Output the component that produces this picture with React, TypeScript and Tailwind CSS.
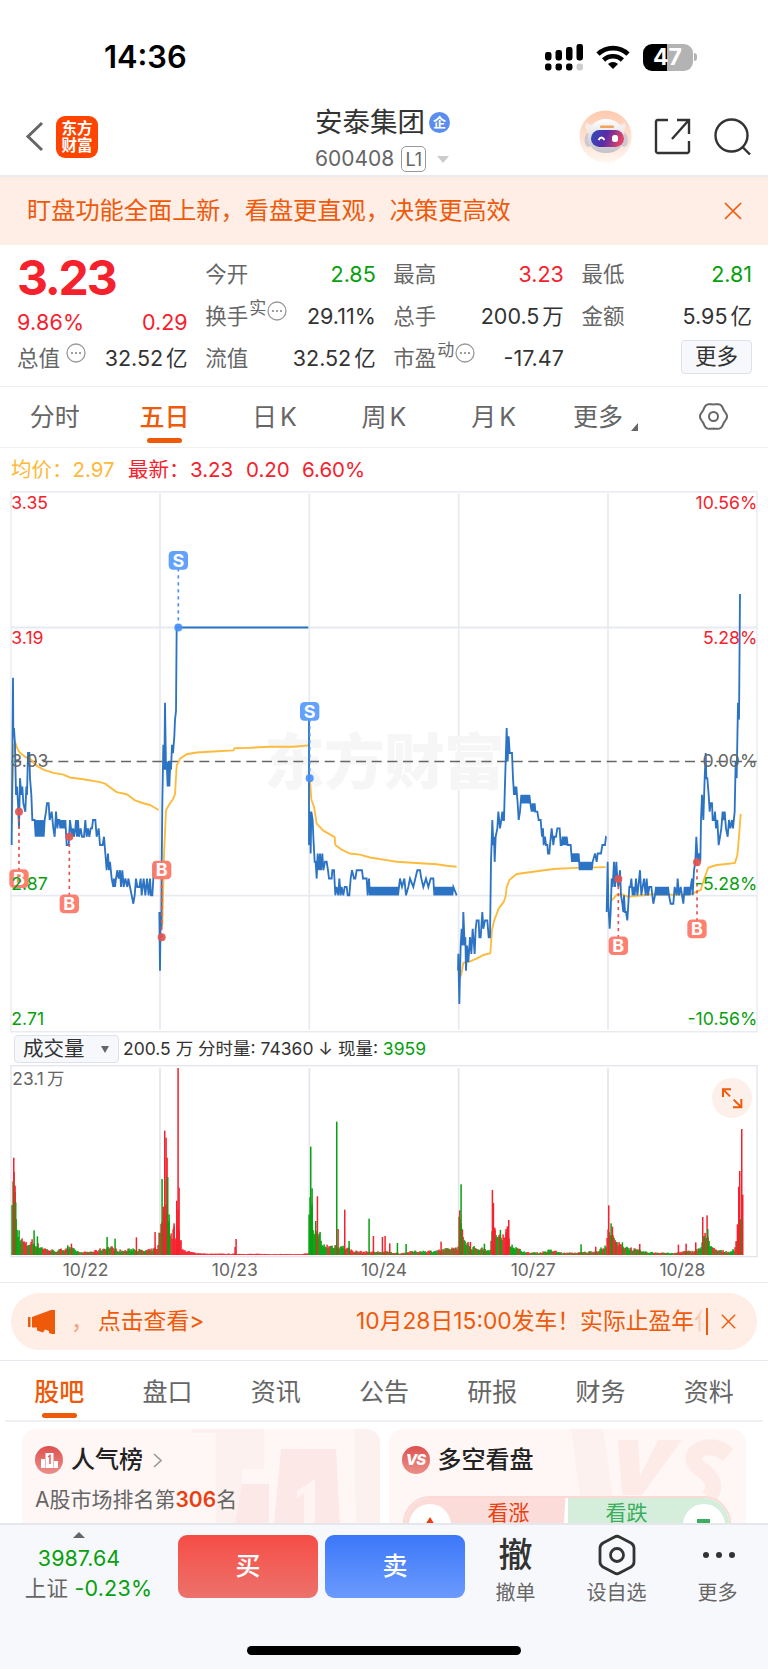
import React from 'react';

type Point = [number, number];

const RED = '#f5222d';
const GREEN = '#07a00e';
const font = "font-[Inter,'Noto_Sans_CJK_SC',sans-serif]";

// back and forth between two price levels
const zig = (from: number, to: number, lo: number, hi: number): Point[] => {
  const out: Point[] = [];
  for (let x = from, i = 0; x <= to; x += 3, i++) {
    out.push([x, i % 2 ? hi : lo]);
  }
  return out;
};

// x in chart units, price in cents
const prices: Point[][] = [
  [
    [35, 293], [39, 313], [40, 306], [42, 307], [45, 305], [48, 299], [51, 300], [54, 298], [57, 295], [60, 301], [64, 299],
    [67, 300], [70, 298], [76, 297], [79, 300], [81, 299], [84, 304], [88, 304], [90, 301], [94, 299], [97, 296], [104, 296],
    ...zig(107, 135, 294, 296), [138, 297], [141, 298], [146, 298], [149, 296], [155, 297], [160, 295], [164, 294],
    [168, 297], [172, 295], [175, 296], ...zig(178, 196, 296, 295), [200, 293], [206, 293], [210, 296], ...zig(213, 224, 295, 294), [226, 295],
    [228, 296], [231, 294], [234, 296], [237, 294], [242, 295], [246, 294], [252, 294], [256, 296], [260, 294], [264, 295], [268, 294], [272, 295], [276, 295],
    [279, 296], [286, 296], [290, 294], [296, 295], [300, 293], [308, 293], [312, 294],
    [316, 292], [320, 290], [324, 292], [327, 290], [330, 291], [335, 289], [340, 288], ...zig(342, 350, 289, 288), [352, 290],
    [356, 289], [360, 290], [363, 288], [367, 290], [371, 288], [376, 289], [382, 288], [385, 289], [390, 288], [395, 287],
    [400, 286], [404, 287], [408, 289], [412, 288], [418, 288], [422, 289], [425, 287], [431, 289], [436, 287], [441, 289], [446, 287],
    [450, 289], [453, 287], [457, 287], [460, 289], [463, 291], [468, 290], [474, 290],
  ],
  [
    [478, 285], [480, 278], [482, 285], [484, 283], [485, 290], [487, 298], [490, 305], [493, 302], [495, 310], [498, 302],
    [500, 303], [503, 300], [506, 303], [508, 300], [511, 303], [513, 302], [516, 305], [519, 304], [523, 306], [525, 308],
    [528, 309], [530, 319], [925, 319],
  ],
  [
    [927, 309], [927, 293], [930, 297], [932, 292], [934, 297], [938, 296], [940, 294], [944, 291], [947, 291], [950, 289],
    [953, 292], [957, 290], [960, 292], [963, 290], [967, 292], [970, 290], [975, 291], [980, 291], [984, 290], [987, 289],
    [995, 289], [997, 290], [1002, 290], [1006, 287], [1010, 288], [1015, 287], [1018, 289], [1022, 287], [1025, 288], [1030, 287],
    [1034, 288], [1040, 288], [1043, 287], [1048, 287], [1052, 289], [1056, 290], [1062, 289], [1066, 289], [1070, 290], [1086, 290],
    [1089, 289], [1100, 289], [1103, 287], [1107, 289], ...zig(1110, 1195, 287, 288), [1200, 289], [1206, 288], [1213, 289],
    [1218, 287], [1225, 288], [1230, 289], [1240, 288], [1246, 289], [1252, 290], [1260, 290], [1264, 289], [1270, 288],
    [1278, 289], [1285, 288], [1292, 289], [1300, 289], ...zig(1303, 1360, 287, 288), [1370, 287],
  ],
  [
    [1374, 278], [1375, 280], [1378, 274], [1382, 281], [1385, 283], [1388, 281], [1390, 285], [1394, 281], [1396, 282], [1398, 278],
    [1401, 281], [1405, 279], [1410, 282], [1414, 280], [1418, 283], [1424, 280], [1427, 283], [1430, 284], [1436, 284],
    [1438, 282], [1442, 282], [1447, 285], [1450, 283], [1455, 284], [1462, 284], [1466, 282], [1470, 282], [1473, 291],
    [1477, 296], [1480, 293], [1482, 294], [1484, 291], [1487, 294], [1492, 295], [1495, 297], [1500, 295], [1504, 296], [1507, 297],
    [1510, 296], [1512, 296], [1514, 299], [1517, 303], [1520, 307], [1523, 303], [1526, 306], [1529, 304], [1536, 304], [1539, 301],
    [1542, 299], [1545, 300], [1547, 299], [1549, 300], [1553, 298], [1556, 296], [1560, 297], [1564, 299], ...zig(1567, 1592, 298, 299), [1595, 297],
    [1598, 298], [1601, 297], [1604, 298], [1606, 297], [1612, 297], [1616, 296], [1622, 296], [1626, 294], [1629, 295], [1631, 293], [1635, 294],
    [1638, 293], [1642, 293], [1644, 292], [1648, 292], [1650, 293], [1655, 295], [1660, 293], [1663, 294], [1668, 294], [1672, 295], [1679, 295], [1682, 293],
    ...zig(1685, 1703, 293, 294), [1707, 293], [1712, 293], [1716, 291], ...zig(1718, 1737, 292, 291), ...zig(1739, 1780, 290, 291),
    [1785, 292], [1790, 291], [1793, 292], [1803, 292], [1807, 293], [1815, 293], [1818, 294], [1819, 294],
  ],
  [
    [1820, 285], [1823, 291], [1825, 286], [1829, 283], [1832, 285], [1835, 289], [1838, 288], [1842, 291], [1845, 288], [1849, 291], [1852, 289],
    [1855, 288], [1860, 290], [1863, 287], [1867, 286], [1870, 285], [1872, 287], [1875, 285], [1878, 285], [1882, 284],
    [1885, 286], [1888, 288], [1891, 288], [1894, 289], [1898, 287], [1901, 288], [1904, 287], [1908, 289], [1912, 287], [1915, 288], [1920, 290], [1924, 287],
    [1928, 288], [1932, 289], [1937, 287], [1940, 289], [1944, 287], [1948, 288], [1954, 288], [1960, 286], [1965, 287], ...zig(1968, 2008, 288, 287),
    [2012, 286], [2020, 286], [2024, 288], [2030, 287], [2033, 289], [2037, 287], [2042, 288], [2050, 286], [2054, 288],
    ...zig(2057, 2072, 287, 288), [2076, 289], [2078, 287], [2082, 290], [2086, 291], [2089, 294], [2093, 291], [2097, 292],
    [2101, 291], [2103, 296], [2106, 299], [2110, 296], [2114, 301], [2117, 304], [2119, 301], [2122, 301], [2126, 299], [2129, 297],
    [2132, 298], [2136, 298], [2138, 296], [2142, 296], [2145, 297], [2148, 295], [2152, 296], [2156, 293], [2160, 294], [2164, 295], [2168, 297], [2171, 296], [2174, 297],
    [2178, 295], [2183, 294], [2187, 296], [2191, 295], [2196, 296], [2199, 295], [2204, 297], [2207, 303], [2210, 301], [2214, 310], [2217, 308],
    [2220, 323],
  ],
];

const averages = [
  '36,960 38,850 42,740 46,735 52,752 58,762 75,775 90,780 110,800 130,811 160,820 190,825 210,833 250,838 300,846 315,850 350,874 380,880 405,897 430,905 450,910 476,924',
  '487,1250 492,1050 498,925 508,908 518,895 525,880 530,800 540,780 560,768 590,763 640,760 700,757 704,751 745,750 810,747 880,747 925,743',
  '930,840 934,895 942,915 950,962 970,982 995,995 1004,1000 1006,1022 1025,1035 1050,1046 1080,1049 1110,1057 1150,1063 1190,1069 1260,1073 1310,1076 1340,1080 1370,1083',
  '1383,1390 1390,1352 1410,1348 1430,1340 1450,1330 1471,1325 1476,1260 1482,1235 1496,1200 1512,1180 1517,1165 1520,1140 1528,1120 1550,1103 1600,1097 1660,1089 1730,1086 1817,1084',
  '1832,1180 1840,1172 1850,1162 1865,1160 1885,1167 1905,1165 1960,1160 2020,1161 2070,1160 2085,1155 2102,1148 2115,1110 2125,1085 2150,1078 2180,1075 2205,1072 2212,1050 2217,1000 2222,935',
];

// y values in the data are in 1/2.8 px, the chart draws in 1/3 px
const Y = 3 / 2.8;
const priceY = (cents: number) => 788 - (cents - 303) * 23.43;

const marks = [
  { t: 'B', x: 57, dot: 929, box: 1116 },
  { t: 'B', x: 208, dot: 999, box: 1187 },
  { t: 'B', x: 485, dot: 1280, box: 1092 },
  { t: 'S', x: 535, dot: 413, box: 225 },
  { t: 'S', x: 929, dot: 835, box: 648 },
  { t: 'B', x: 1855, dot: 1117, box: 1304 },
  { t: 'B', x: 2091, dot: 1070, box: 1257 },
];

const axis = [
  { y: 82, l: '3.35', r: '10.56%', c: RED },
  { y: 458, l: '3.19', r: '5.28%', c: RED },
  { y: 804, l: '3.03', r: '0.00%', c: '#666' },
  { y: 1149, l: '2.87', r: '-5.28%', c: GREEN },
  { y: 1526, l: '2.71', r: '-10.56%', c: GREEN },
];

const dayLines = [480, 928, 1376, 1824];

function PriceChart() {
  return (
    <svg className="block h-[543px] w-full" viewBox="0 30 2304 1629">
      <g transform={`scale(1 ${Y})`} stroke="#e8eaf0" fill="none">
        <rect x="33" y="33" width="2238" height="1512" strokeWidth="4" />
        {dayLines.map(x => (
          <line key={x} x1={x} x2={x} y1="38" y2="1539" strokeWidth="5" />
        ))}
        <line x1="33" x2="2270" y1="413" y2="413" strokeWidth="5" />
        <line x1="33" x2="2270" y1="1164" y2="1164" strokeWidth="5" />
      </g>
      <text x="792" y="912" fontSize="182" fontWeight="900" fill="#f6f6f6" textLength="722">东方财富</text>
      <g transform={`scale(1 ${Y})`} fill="none">
        <line x1="33" x2="2270" y1="788" y2="788" stroke="#666" strokeWidth="4" strokeDasharray="30 17" strokeDashoffset="-1" />
        {averages.map((points, i) => (
          <polyline key={i} points={points} stroke="#fdbb3d" strokeWidth="5.500" />
        ))}
        {prices.map((day, i) => (
          <polyline key={i} points={day.map(([x, c]) => `${x},${priceY(c)}`).join(' ')} stroke="#2c73c4" strokeWidth="5.500" />
        ))}
      </g>
      {marks.map(m => {
        const color = m.t === 'B' ? '#fd7969' : '#5a9dfd';
        const dot = m.t === 'B' ? '#e25550' : '#4a90f5';
        return (
          <g key={m.x}>
            <line x1={m.x} x2={m.x} y1={m.dot * Y} y2={m.box * Y} stroke={dot} strokeWidth="5" strokeDasharray="10 11" />
            <circle cx={m.x} cy={m.dot * Y} r="12" fill={dot} fillOpacity="0.92" />
            <rect x={m.x - 29} y={m.box * Y - 28} width="58" height="56" rx="13" fill={color} fillOpacity="0.95" />
            <text x={m.x} y={m.box * Y + 19} fontSize="54" fontWeight="700" fill="#fff" textAnchor="middle">{m.t}</text>
          </g>
        );
      })}
      {axis.map(a => (
        <g key={a.l} fill={a.c} fontSize="53">
          <text x="34" y={a.y * Y}>{a.l}</text>
          <text x="2272" y={a.y * Y} textAnchor="end">{a.r}</text>
        </g>
      ))}
    </svg>
  );
}

// envelope of the small bars: x, height
const volume: Point[] = [
  [35, 85], [38, 290], [43, 290], [46, 160], [50, 90], [56, 60], [64, 38], [80, 26], [95, 34], [110, 26], [140, 14], [170, 10],
  [200, 18], [215, 16], [240, 6], [280, 9], [310, 16], [330, 20], [350, 13], [370, 10], [400, 16], [430, 10], [460, 14],
  [474, 22], [482, 100], [488, 140], [496, 170], [504, 130], [512, 60], [524, 60], [530, 70], [534, 150], [540, 50], [548, 12],
  [580, 6], [620, 3], [700, 3], [900, 2], [924, 4], [928, 170], [936, 190], [940, 70], [955, 80], [964, 25], [990, 22], [1010, 24], [1040, 18], [1060, 10], [1090, 8],
  [1160, 8], [1200, 4], [1240, 9], [1300, 10], [1340, 14], [1374, 20], [1377, 120], [1384, 100], [1392, 45], [1410, 20], [1440, 16],
  [1470, 14], [1476, 80], [1484, 60], [1500, 45], [1515, 40], [1524, 90], [1530, 32], [1550, 16], [1580, 6], [1620, 6], [1650, 12], [1690, 5], [1740, 6],
  [1790, 10], [1818, 22], [1824, 60], [1832, 90], [1842, 35], [1860, 25], [1880, 20], [1910, 12], [1940, 7], [1990, 6], [2020, 4],
  [2050, 9], [2080, 9], [2104, 20], [2112, 50], [2122, 60], [2130, 20], [2150, 12], [2190, 8], [2206, 18], [2212, 50], [2222, 110], [2228, 110],
];

const spikes: [number, number, string][] = [
  [41, 292, RED], [45, 208, RED], [47, 158, GREEN], [102, 74, GREEN], [112, 56, GREEN], [203, 29, GREEN], [214, 34, RED],
  [321, 54, GREEN], [345, 49, GREEN], [409, 53, RED], [465, 69, RED], [486, 228, GREEN], [490, 145, RED], [494, 373, RED], [498, 352, RED],
  [501, 292, RED], [503, 234, GREEN], [507, 122, GREEN], [522, 95, RED], [530, 163, RED], [534, 561, RED], [537, 202, RED], [705, 24, RED], [708, 48, RED],
  [932, 325, GREEN], [936, 200, GREEN], [947, 102, GREEN], [952, 176, RED], [1010, 400, GREEN], [1014, 78, RED], [1034, 136, RED],
  [1047, 42, GREEN], [1107, 109, GREEN], [1120, 57, RED], [1147, 54, RED], [1155, 57, RED], [1169, 35, RED], [1192, 36, GREEN], [1218, 33, GREEN],
  [1323, 40, RED], [1379, 134, RED], [1383, 212, GREEN], [1387, 75, RED], [1411, 39, RED], [1453, 34, GREEN], [1477, 195, RED], [1480, 156, RED], [1484, 82, RED],
  [1501, 75, GREEN], [1518, 70, RED], [1522, 86, RED], [1526, 105, RED], [1743, 32, GREEN], [1787, 25, RED], [1826, 149, RED], [1833, 95, GREEN], [1837, 85, RED],
  [1847, 40, RED], [1867, 38, GREEN], [1919, 33, RED], [2035, 31, RED], [2058, 34, RED], [2087, 38, RED], [2108, 114, RED],
  [2113, 55, GREEN], [2121, 119, RED], [2123, 78, GREEN], [2212, 92, RED], [2216, 205, RED], [2219, 252, RED], [2222, 108, GREEN], [2225, 378, RED], [2228, 181, RED],
];

const bars: [number, number, string][] = [];
let seed = 7;
const rand = () => {
  seed = (seed * 16807) % 2147483647;
  return seed / 2147483647;
};
for (let x = 36, k = 0; x < 2229; x += 3) {
  while (volume[k + 1] && volume[k + 1][0] < x) k++;
  const [x0, h0] = volume[k];
  const [x1, h1] = volume[k + 1] || volume[k];
  const h = h0 + ((h1 - h0) * (x - x0)) / (x1 - x0 || 1);
  const onlyRed = (x > 512 && x < 926) || (x > 1506 && x < 1530);
  const open = (x > 926 && x < 964) || (x > 44 && x < 64) || (x > 1376 && x < 1386);
  const color = onlyRed ? RED : rand() < (open ? 0.9 : 0.58) ? GREEN : RED;
  bars.push([x, h * (h > 60 ? 0.7 + rand() * 0.3 : 0.8 + rand() * 0.7), color]);
}

function VolumeChart() {
  return (
    <svg className="block h-[195px] w-full" viewBox="0 99 2304 585">
      <g stroke="#e3e5ee" fill="none">
        <rect x="33" y="107" width="2238" height="573" strokeWidth="4" />
        {dayLines.map(x => (
          <line key={x} x1={x} x2={x} y1="114" y2="676" strokeWidth="5" />
        ))}
      </g>
      {[...bars, ...spikes].map(([x, h, c], i) => (
        <rect key={i} x={x - 2} y={675 - h} width="4.500" height={h} fill={c} />
      ))}
      <text x="37" y="164" fontSize="52" fill="#666">23.1<tspan dx="10">万</tspan></text>
      <circle cx="2196" cy="204" r="60" fill="#fdf0ea" />
      <g stroke="#ee5a0a" strokeWidth="6" fill="none">
        <path d="M2169 201V178h24M2170 179l20 20" />
        <path d="M2224 207v25h-25M2223 231l-22-22" />
      </g>
    </svg>
  );
}

const Dots = () => (
  <svg className="h-5 w-5 shrink-0" viewBox="0 0 20 20">
    <circle cx="10" cy="10" r="9" fill="none" stroke="#999" strokeWidth="1.3" />
    <circle cx="6" cy="10" r="1.1" fill="#888" />
    <circle cx="10" cy="10" r="1.1" fill="#888" />
    <circle cx="14" cy="10" r="1.1" fill="#888" />
  </svg>
);

const Cross = ({ className }: { className: string }) => (
  <svg className={className} viewBox="0 0 18 18" stroke="#ee5a0a" strokeWidth="1.7">
    <path d="M1 1l16 16M17 1L1 17" />
  </svg>
);

interface StatProps {
  label: string;
  value: string;
  unit?: string;
  tone?: string;
  sup?: string;
  dots?: boolean;
}

function Stat({ label, value, unit, tone = 'text-[#333]', sup, dots }: StatProps) {
  return (
    <div className="flex h-[42px] items-center whitespace-nowrap">
      <span className="text-[21.5px] text-[#666]">{label}</span>
      {sup && <span className="-mt-3.5 ml-px text-[17px] text-[#666]">{sup}</span>}
      {dots && <span className={sup ? '-mt-2.5 ml-px' : '-mt-2.5 ml-1.5'}><Dots /></span>}
      <span className={`ml-auto text-[21.5px] ${tone}`}>
        {value}
        {unit && <span className="ml-[3px]">{unit}</span>}
      </span>
    </div>
  );
}

function StatusBar() {
  return (
    <div className="flex h-[94px] items-center justify-between pt-[20px] pr-[71px] pl-[104px]">
      <span className="text-[30.8px] font-semibold">14:36</span>
      <div className="flex items-center">
        <svg className="h-[27px] w-[38px]" viewBox="0 0 38 27">
          <rect x="0" y="8" width="6.500" height="8.500" rx="2.400" />
          <rect x="10.500" y="6" width="6.500" height="10.500" rx="2.400" />
          <rect x="21" y="3" width="6.500" height="13.500" rx="2.400" />
          <rect x="31.500" y="0" width="6.500" height="16.500" rx="2.400" />
          <rect x="0" y="19.500" width="6.500" height="7" rx="2.400" />
          <rect x="10.500" y="19.500" width="6.500" height="7" rx="2.400" />
          <rect x="21" y="19.500" width="6.500" height="7" rx="2.400" />
          <rect x="31.500" y="19.500" width="6.500" height="7" rx="2.400" fill="#ccc" />
        </svg>
        <svg className="ml-[13px] h-6 w-[34px]" viewBox="0 0 34 24" fill="none" stroke="#000" strokeWidth="4.6">
          <path d="M2 9.2a21.5 21.5 0 0 1 30 0" />
          <path d="M7.6 15a13.5 13.5 0 0 1 18.8 0" />
          <path d="M17 24l-5-5a7.2 7.2 0 0 1 10 0z" fill="#000" stroke="none" />
        </svg>
        <div className="ml-[13px] flex h-[27px] w-[50px] items-center justify-center rounded-[9px] bg-linear-to-r from-black from-47% to-[#b3b3b3] to-47% text-[23px] font-bold text-white">47</div>
        <div className="ml-[1.5px] h-2 w-[3px] rounded-r-full bg-[#b3b3b3]" />
      </div>
    </div>
  );
}

function Robot() {
  return (
    <svg className="h-[53px] w-[53px]" viewBox="0 0 53 53">
      <defs>
        <linearGradient id="halo" x1="0" y1="0" x2="0" y2="1">
          <stop offset="0" stopColor="#fdc9ae" />
          <stop offset="1" stopColor="#fff6f1" />
        </linearGradient>
        <linearGradient id="visor" x1="0" y1="0" x2="1" y2="0.2">
          <stop offset="0" stopColor="#2c50b8" />
          <stop offset="0.5" stopColor="#5a2aa8" />
          <stop offset="1" stopColor="#dc4468" />
        </linearGradient>
        <linearGradient id="shell" x1="0" y1="0" x2="0" y2="1">
          <stop offset="0" stopColor="#fff" />
          <stop offset="1" stopColor="#c4c1c8" />
        </linearGradient>
      </defs>
      <circle cx="26.500" cy="26.500" r="26" fill="url(#halo)" />
      <path d="M7 12q-2 7 3 11l6-9q-6 2-9-2zM46 12q2 7-3 11l-6-9q6 2 9-2z" fill="#f3ecec" />
      <ellipse cx="9.500" cy="30" rx="4" ry="7" fill="#cfcad2" />
      <ellipse cx="45" cy="30" rx="4" ry="7" fill="#cfcad2" />
      <path d="M27 9c11 0 18 8 18 18 0 10-7 16-18 16S9 37 9 27c0-10 7-18 18-18z" fill="url(#shell)" />
      <rect x="12" y="20" width="33" height="17" rx="8.500" fill="url(#visor)" />
      <path d="M19.500 30q3-5 6 0" fill="none" stroke="#fff" strokeWidth="2" />
      <rect x="33" y="25" width="6" height="7" rx="2.500" fill="#fff" />
      <rect x="21" y="15.500" width="14" height="2.500" rx="1" fill="#f0a35e" />
    </svg>
  );
}

function Header() {
  return (
    <header className="flex h-[83px] items-center border-b-2 border-[#ececf0] pt-[4px] pr-[17px] pl-[25px]">
      <div className="flex w-[290px] items-center">
        <svg className="h-[31px] w-[19px]" viewBox="0 0 19 31" fill="none" stroke="#666" strokeWidth="3">
          <path d="M17 2L3 15.500l14 13.500" />
        </svg>
        <div className="ml-3 flex h-[42px] w-[42px] flex-col items-center justify-center rounded-[9px] bg-[#ff4400] text-[15.5px] leading-[17px] font-bold text-white">
          <span>东方</span>
          <span>财富</span>
        </div>
      </div>
      <div className="flex w-[264px] flex-col pt-[8px]">
        <div className="flex h-[37px] items-center">
          <span className="text-[27.5px] text-[#333]">安泰集团</span>
          <span className="ml-[4px] flex h-[21px] w-[21px] items-center justify-center rounded-full bg-[#5b8def] text-[13px] font-bold text-white">企</span>
        </div>
        <div className="flex h-[36px] items-center text-[#666]">
          <span className="text-[21px]">600408</span>
          <span className="ml-[7px] flex h-[26px] w-[25px] items-center justify-center rounded-[5px] border-[1.5px] border-[#999] text-[18px]">L1</span>
          <span className="ml-[11px] border-x-[6px] border-t-[7px] border-x-transparent border-t-[#ccc]" />
        </div>
      </div>
      <Robot />
      <svg className="ml-[22px] h-[37px] w-[37px]" viewBox="0 0 37 37" fill="none" stroke="#333" strokeWidth="2.4">
        <path d="M14 2H3.500A2 2 0 0 0 2 3.500v30A2 2 0 0 0 3.500 35h30a2 2 0 0 0 1.500-1.500V23" />
        <path d="M23 2h12v14M34 3L18 21" />
      </svg>
      <svg className="ml-auto h-[37px] w-[37px]" viewBox="0 0 37 37" fill="none" stroke="#333" strokeWidth="2.4">
        <circle cx="17.500" cy="17.500" r="16" />
        <path d="M28.500 29l7.500 7.500" />
      </svg>
    </header>
  );
}

function Quote() {
  return (
    <section className="flex h-[142px] gap-[17.5px] border-b border-[#eeeff2] pt-2 pr-4 pl-[17px]">
      <div className="flex-1">
        <div className="flex h-[54px] items-center pb-1 text-[48px] font-bold tracking-[-2.2px] text-[#f5222d]">3.23</div>
        <div className="flex h-[30px] items-center justify-between text-[21.5px] text-[#f5222d]">
          <span className="tracking-[0.2px]">9.86%</span>
          <span>0.29</span>
        </div>
        <Stat label="总值" value="32.52" unit="亿" dots />
      </div>
      <div className="flex-1">
        <Stat label="今开" value="2.85" tone="text-[#07a00e]" />
        <Stat label="换手" value="29.11%" sup="实" dots />
        <Stat label="流值" value="32.52" unit="亿" />
      </div>
      <div className="flex-1">
        <Stat label="最高" value="3.23" tone="text-[#f5222d]" />
        <Stat label="总手" value="200.5" unit="万" />
        <Stat label="市盈" value="-17.47" sup="动" dots />
      </div>
      <div className="flex-1">
        <Stat label="最低" value="2.81" tone="text-[#07a00e]" />
        <Stat label="金额" value="5.95" unit="亿" />
        <div className="flex h-[39px] items-center justify-end">
          <button className="h-[34px] w-[71px] rounded-[4px] border border-[#dfe1ea] bg-[#f7f8fc] text-[21.5px] leading-none text-[#333]">更多</button>
        </div>
      </div>
    </section>
  );
}

const periods = ['分时', '五日', '日K', '周K', '月K'];

// six rounded lobes around the centre
const gear = Array.from({ length: 72 }, (_, i) => {
  const a = (i * Math.PI) / 36;
  const r = 12.8 + 0.7 * Math.cos(6 * a);
  return `${(14.5 + r * Math.cos(a)).toFixed(2)},${(14.5 + r * Math.sin(a)).toFixed(2)}`;
}).join(' ');

function PeriodTabs() {
  return (
    <nav className="grid h-[61px] grid-cols-7 border-b border-[#eeeff2] text-[25px] text-[#666]">
      {periods.map(p => (
        <div key={p} className={`flex flex-col items-center pt-[12px] ${p === '五日' ? 'font-medium text-[#ee5a0a]' : ''}`}>
          <span className="h-[36px] leading-[36px]">
            {p.charAt(0)}
            <span className={p.endsWith('K') ? 'ml-[3px]' : ''}>{p.charAt(1)}</span>
          </span>
          {p === '五日' && <span className="mt-[3px] h-[5px] w-[35px] rounded-full bg-[#ee5a0a]" />}
        </div>
      ))}
      <div className="flex justify-center pt-[12px] pl-[4px]">
        <span className="leading-[36px]">更多</span>
        <svg className="mt-[24px] ml-[8px] h-2 w-[7px]" viewBox="0 0 7 8"><path d="M7 0v8H0z" fill="#666" /></svg>
      </div>
      <div className="flex justify-center pt-[15px]">
        <svg className="h-[29px] w-[29px]" viewBox="0 0 29 29" fill="none" stroke="#666" strokeWidth="2">
          <polygon points={gear} />
          <circle cx="14.500" cy="14.500" r="4.500" />
        </svg>
      </div>
    </nav>
  );
}

const sections = ['股吧', '盘口', '资讯', '公告', '研报', '财务', '资料'];

function Cards() {
  return (
    <div className="flex h-[101px] gap-[9px] overflow-hidden px-[22px] pt-[7px]">
      <div className="relative h-[120px] flex-1 overflow-hidden rounded-t-[14px] bg-[#fff7f5]">
        <svg className="absolute top-0 right-0 h-[95px] w-[190px]" viewBox="0 0 190 95">
          <path d="M2 0h72v40H52v55H26V4H2z" fill="#fdf1ef" />
          <path d="M52 55h27v40H45zM91 20h55l4 75H84z" fill="#fce8e6" />
          <path d="M165 0h25v74h-25zM166 74h24v21h-24z" fill="#fdf1ef" />
          <path d="M107 62l18-12v45h-11V64l-7 5z" fill="#fff4f2" />
        </svg>
        <div className="relative flex h-[62px] items-center pl-[13px]">
          <svg className="h-7 w-7" viewBox="0 0 28 28">
            <defs>
              <linearGradient id="rank" x1="0" y1="0" x2="0" y2="1">
                <stop offset="0" stopColor="#dd504e" />
                <stop offset="1" stopColor="#eb8f8a" />
              </linearGradient>
            </defs>
            <circle cx="14" cy="14" r="14" fill="url(#rank)" />
            <path d="M6 13h4v9H6zM10.500 7h8v15h-8zM19 15h4v7h-4z" fill="#fff" />
            <path d="M13 11l2-1.500V18" stroke="#e2605c" strokeWidth="1.500" fill="none" />
          </svg>
          <span className="ml-2 text-[24px] font-medium text-[#222]">人气榜</span>
          <svg className="ml-[10px] h-[15px] w-[9px]" viewBox="0 0 9 15" fill="none" stroke="#999" strokeWidth="1.6"><path d="M1 1l7 6.500L1 14" /></svg>
        </div>
        <p className="relative -mt-[7px] pl-[13px] text-[21px] leading-[32px] text-[#666]">
          A股市场排名第<span className="font-semibold text-[#ea4011]">306</span>名
        </p>
      </div>
      <div className="relative h-[120px] flex-1 overflow-hidden rounded-t-[14px] bg-[#fff7f5]">
        <svg className="absolute top-0 right-0 h-[95px] w-[190px]" viewBox="0 0 190 95">
          <path d="M15 0h32l10 68H24z" fill="#fdf1ef" />
          <path d="M62 11h20l2 36 18-36h24L86 66H66z" fill="#fdebe8" />
          <path d="M172 26q-12-11-27-6-14 7-2 19 22 13 10 29" fill="none" stroke="#fdebe8" strokeWidth="16" />
        </svg>
        <div className="relative flex h-[62px] items-center pl-[13px]">
          <span className="flex h-7 w-7 items-center justify-center rounded-full bg-linear-to-b from-[#dd504e] to-[#eb8f8a] text-[15px] font-extrabold tracking-[-1px] text-white italic">VS</span>
          <span className="ml-2 text-[24px] font-medium text-[#222]">多空看盘</span>
        </div>
        <div className="relative mt-[5px] ml-[14px] flex h-[54px] w-[328px] overflow-hidden rounded-full border-2 border-[#fbd9d5] bg-white text-[21px] leading-[30px]">
          <div className="flex flex-1 bg-[#fcdcd9] text-[#ea4011] [clip-path:polygon(0_0,100%_0,98%_100%,0_100%)]">
            <span className="mt-1.5 ml-1 flex h-[42px] w-[42px] shrink-0 justify-center rounded-full bg-white pt-[13px]">
              <span className="h-0 border-x-[5px] border-b-[8px] border-x-transparent border-b-[#ea4011]" />
            </span>
            <span className="ml-[37px]">看涨</span>
          </div>
          <div className="ml-[2px] flex flex-1 justify-end bg-[#d5eedb] text-[#3cae5e]">
            <span className="mr-[35px]">看跌</span>
            <span className="mt-1.5 mr-1 flex h-[42px] w-[42px] shrink-0 justify-center rounded-full bg-white pt-[15px]">
              <span className="h-[4px] w-[13px] bg-[#3cae5e]" />
            </span>
          </div>
        </div>
      </div>
    </div>
  );
}

function BottomBar() {
  return (
    <footer className="h-[147px] border-t-2 border-[#e6e7ec] bg-[#f7f8fc]">
      <div className="flex">
        <div className="flex w-[178px] flex-col items-center pr-[20px] pt-[7px] text-[21.5px] text-[#07a00e]">
          <span className="border-x-[6px] border-b-[6px] border-x-transparent border-b-[#666]" />
          <span className="mt-[5px] leading-[30px]">3987.64</span>
          <span className="ml-[19px] leading-[31px] tracking-[0.2px] whitespace-nowrap"><span className="text-[#666]">上证</span> -0.23%</span>
        </div>
        <button className="mt-[10px] h-[63px] w-[140px] rounded-[9px] bg-linear-to-b from-[#f54c46] to-[#ec716b] text-[25px] font-medium text-white">买</button>
        <button className="mt-[10px] ml-[7px] h-[63px] w-[140px] rounded-[9px] bg-linear-to-b from-[#3b77f8] to-[#6b9afe] text-[25px] font-medium text-white">卖</button>
        <div className="grid flex-1 grid-cols-3 pt-[9px] text-center text-[20px] text-[#666]">
          <div>
            <div className="h-[42px] text-[34px] leading-[42px] font-medium text-[#333]">撤</div>
            <div className="leading-[34px]">撤单</div>
          </div>
          <div>
            <svg className="mx-auto h-[42px] w-[42px]" viewBox="0 0 42 42" fill="none" stroke="#333" strokeWidth="2.800" strokeLinejoin="round">
              <path d="M18.500 3q2.500-1.500 5 0L35 9q3 2 3 5v14q0 3-3 5l-11.500 6q-2.500 1.500-5 0L7 33q-3-2-3-5V14q0-3 3-5z" />
              <circle cx="21" cy="21" r="6.500" />
            </svg>
            <div className="leading-[34px]">设自选</div>
          </div>
          <div>
            <svg className="mx-auto h-[42px] w-[42px]" viewBox="0 0 42 42" fill="#333">
              <circle cx="9" cy="21" r="3" />
              <circle cx="22" cy="21" r="3" />
              <circle cx="35" cy="21" r="3" />
            </svg>
            <div className="leading-[34px]">更多</div>
          </div>
        </div>
      </div>
      <div className="mx-auto mt-[36px] h-[9px] w-[274px] rounded-full bg-black" />
    </footer>
  );
}

const App: React.FC = () => {
  return (
    <div className={`h-[1669px] w-[768px] overflow-hidden bg-white ${font}`}>
      <StatusBar />
      <Header />
      <div className="flex h-[68px] items-center justify-between bg-[#feeee6] pr-[26px] pl-[27px] text-[24.2px] text-[#ee5a0a]">
        <span>盯盘功能全面上新，看盘更直观，决策更高效</span>
        <Cross className="h-[18px] w-[18px]" />
      </div>
      <Quote />
      <PeriodTabs />
      <div className="flex h-[42px] items-center pt-[2px] pl-[11px] text-[20.5px] whitespace-pre text-[#f5222d]">
        <span className="w-[117px] text-[#fdb93a]">均价：2.97</span>
        <span className="w-[62px]">最新：</span>
        <span className="w-[56px]">3.23</span>
        <span className="w-[56px]">0.20</span>
        <span>6.60%</span>
      </div>
      <PriceChart />
      <div className="flex h-[30px] items-center pt-[2px] pl-[14px] text-[17.5px] text-[#333]">
        <div className="flex h-7 w-[105px] items-center justify-between rounded-[4px] border border-[#dfe1ea] bg-[#f7f8fc] pr-[9px] pl-[8px] text-[20.5px]">
          成交量
          <span className="border-x-[4px] border-t-[7px] border-x-transparent border-t-[#666]" />
        </div>
        <span className="ml-1">200.5 万 分时量: 74360 ↓ 现量: <span className="text-[#07a00e]">3959</span></span>
      </div>
      <VolumeChart />
      <div className="grid h-[24px] grid-cols-5 px-[11px] text-center text-[17.5px] leading-[23px] text-[#666]">
        {['10/22', '10/23', '10/24', '10/27', '10/28'].map(d => (
          <span key={d}>{d}</span>
        ))}
      </div>
      <div className="border-y border-[#e9eaf0] px-[11px] py-[10px]">
        <div className="flex h-[57px] items-center rounded-full bg-[#feeee6] pl-[17px] text-[22.8px] text-[#ee5a0a]">
          <svg className="h-6 w-[27px]" viewBox="0 0 27 24" fill="#ee5a0a">
            <path d="M0 7h2.500v10H0zM4 7l19-7h4v24h-3l-3-1v-2l-4-1.500-2 3-6-2v-3H4z" />
          </svg>
          <div className="relative ml-[16px] flex w-[635px] overflow-hidden whitespace-nowrap">
            <span className="w-[27px] shrink-0 opacity-50">，</span>
            <span className="w-[258px] shrink-0">点击查看&gt;</span>
            <span className="shrink-0">10月28日15:00发车！实际止盈年化</span>
            <span className="absolute top-0 right-0 h-full w-3 bg-linear-to-r from-[#feeee6]/60 to-[#feeee6]" />
          </div>
          <span className="h-[27px] w-[1.500px] bg-[#ee5a0a]" />
          <Cross className="ml-[13px] h-[15px] w-[15px]" />
        </div>
      </div>
      <nav className="mx-[5px] grid h-[61px] grid-cols-7 border-b-2 border-[#eef0f4] text-[25px] text-[#666]">
        {sections.map((s, i) => (
          <div key={s} className={`flex flex-col items-center pt-[13px] ${i === 0 ? 'font-medium text-[#ee5a0a]' : ''}`}>
            <span className="h-[36px] leading-[36px]">{s}</span>
            {i === 0 && <span className="mt-[3px] h-[5px] w-[35px] rounded-full bg-[#ee5a0a]" />}
          </div>
        ))}
      </nav>
      <Cards />
      <BottomBar />
    </div>
  );
};

export default App;
